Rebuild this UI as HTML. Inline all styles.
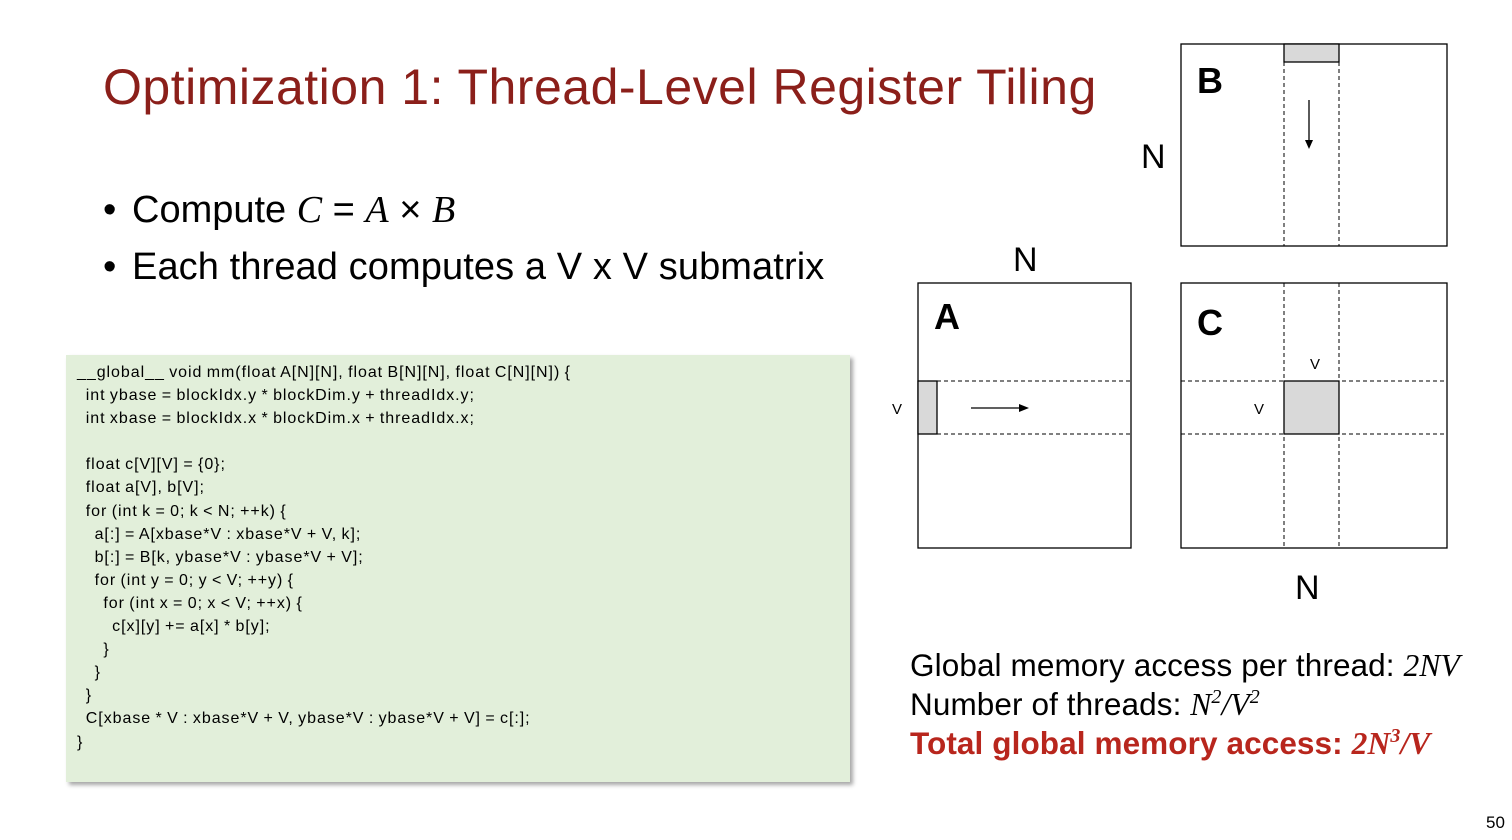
<!DOCTYPE html>
<html><head><meta charset="utf-8"><style>
body{margin:0;width:1512px;height:840px;background:#fff;position:relative;overflow:hidden;font-family:"Liberation Sans",sans-serif}
.a{position:absolute;white-space:nowrap}
.m{font-family:"Liberation Serif",serif;font-style:italic}
sup{font-size:20px;vertical-align:0;position:relative;top:-12px;line-height:0}
#code{position:absolute;left:66px;top:355px;width:784px;height:427px;background:#e2efda;box-shadow:3px 3px 4px rgba(0,0,0,0.35)}
#code pre{margin:0;position:absolute;left:11px;top:6px;font-family:"Liberation Sans",sans-serif;font-size:16px;line-height:23.1px;color:#000;letter-spacing:0.95px;word-spacing:-1px}
</style></head><body>
<div class="a" style="left:103px;top:58px;font-size:50px;color:#8b1f1a;letter-spacing:0.5px">Optimization 1: Thread-Level Register Tiling</div>
<div class="a" style="left:103px;top:188px;font-size:38px"><span style="display:inline-block;width:29px">•</span>Compute <span class="m">C</span> = <span class="m">A</span> × <span class="m">B</span></div>
<div class="a" style="left:103px;top:246px;font-size:38px;letter-spacing:0.1px"><span style="display:inline-block;width:29px">•</span>Each thread computes a V x V submatrix</div>
<div id="code"><pre>__global__ void mm(float A[N][N], float B[N][N], float C[N][N]) {
  int ybase = blockIdx.y * blockDim.y + threadIdx.y;
  int xbase = blockIdx.x * blockDim.x + threadIdx.x;

  float c[V][V] = {0};
  float a[V], b[V];
  for (int k = 0; k &lt; N; ++k) {
    a[:] = A[xbase*V : xbase*V + V, k];
    b[:] = B[k, ybase*V : ybase*V + V];
    for (int y = 0; y &lt; V; ++y) {
      for (int x = 0; x &lt; V; ++x) {
        c[x][y] += a[x] * b[y];
      }
    }
  }
  C[xbase * V : xbase*V + V, ybase*V : ybase*V + V] = c[:];
}</pre></div>
<svg class="a" style="left:0;top:0" width="1512" height="840">
<g fill="none" stroke="#000" stroke-width="1.3">
<rect x="1181" y="44" width="266" height="202"/>
<rect x="1284" y="44" width="55" height="18" fill="#d9d9d9"/>
<rect x="918" y="283" width="213" height="265"/>
<rect x="918" y="381" width="19" height="53" fill="#d9d9d9"/>
<rect x="1181" y="283" width="266" height="265"/>
<rect x="1284" y="381" width="55" height="53" fill="#d9d9d9"/>
</g>
<g stroke="#000" stroke-width="1" stroke-dasharray="4,3">
<line x1="1284" y1="62" x2="1284" y2="246"/><line x1="1339" y1="62" x2="1339" y2="246"/>
<line x1="937" y1="381" x2="1131" y2="381"/><line x1="937" y1="434" x2="1131" y2="434"/>
<line x1="1284" y1="283" x2="1284" y2="548"/><line x1="1339" y1="283" x2="1339" y2="548"/>
<line x1="1181" y1="381" x2="1447" y2="381"/><line x1="1181" y1="434" x2="1447" y2="434"/>
</g>
<line x1="1309" y1="100" x2="1309" y2="142" stroke="#000" stroke-width="1.3"/>
<path d="M1305 140 L1309 149 L1313 140Z"/>
<line x1="971" y1="408" x2="1021" y2="408" stroke="#000" stroke-width="1.3"/>
<path d="M1019 404 L1029 408 L1019 412Z"/>
</svg>
<div class="a" style="left:1197px;top:60px;font-size:36px;font-weight:bold">B</div>
<div class="a" style="left:934px;top:296px;font-size:36px;font-weight:bold">A</div>
<div class="a" style="left:1197px;top:302px;font-size:36px;font-weight:bold">C</div>
<div class="a" style="left:1141px;top:138px;font-size:34px">N</div>
<div class="a" style="left:1013px;top:241px;font-size:34px">N</div>
<div class="a" style="left:1295px;top:569px;font-size:34px">N</div>
<div class="a" style="left:892px;top:401px;font-size:15px">V</div>
<div class="a" style="left:1254px;top:401px;font-size:15px">V</div>
<div class="a" style="left:1310px;top:356px;font-size:15px">V</div>
<div class="a" style="left:910px;top:646px;font-size:31.5px;line-height:39px;letter-spacing:0.1px">Global memory access per thread: <span class="m">2NV</span><br>Number of threads: <span class="m">N<sup>2</sup>/V<sup>2</sup></span><br><span style="color:#b8261d;font-weight:bold">Total global memory access: <span class="m">2N<sup>3</sup>/V</span></span></div>
<div class="a" style="left:1486px;top:813px;font-size:17px">50</div>
</body></html>
